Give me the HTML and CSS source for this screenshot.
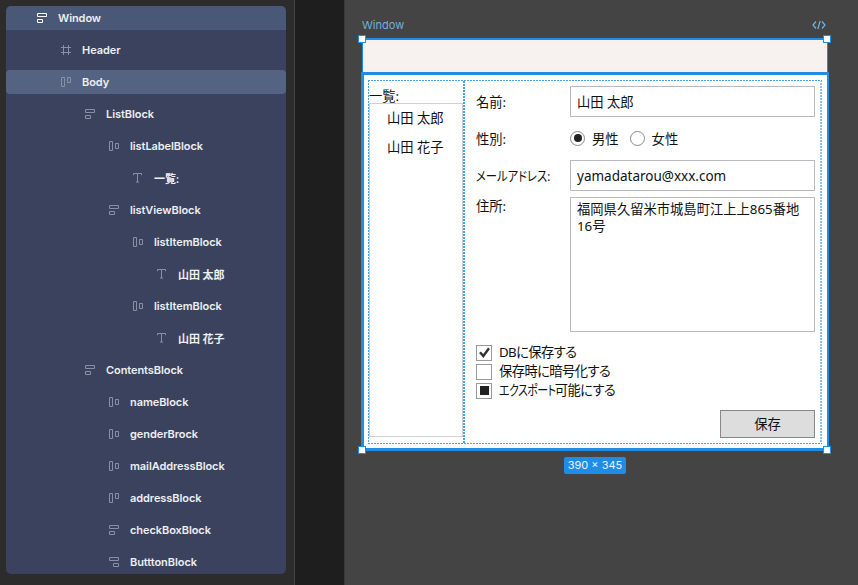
FILE: index.html
```html
<!DOCTYPE html>
<html lang="ja">
<head>
  <meta charset="UTF-8" />
  <meta name="viewport" content="width=device-width, initial-scale=1.0"/>
  <title>Window</title>
  <link rel="stylesheet" href="styles.css">
</head>
<body>

  <!-- Layer icons -->
  <svg class="icon-defs">
    <symbol id="icon-vertical" viewBox="0 0 12 12"><path d="M1.500 1.500h9v3h-9zM1.500 7.500h5v3h-5z"/></symbol>
    <symbol id="icon-vertical-right" viewBox="0 0 12 12"><path d="M1.500 1.500h9v3h-9zM5.500 7.500h5v3h-5z"/></symbol>
    <symbol id="icon-horizontal" viewBox="0 0 12 12"><path d="M1.500 1.500h3v9h-3zM7.500 3.500h3v5h-3z"/></symbol>
    <symbol id="icon-horizontal-top" viewBox="0 0 12 12"><path d="M1.500 1.500h3v9h-3zM7.500 1.500h3v5h-3z"/></symbol>
    <symbol id="icon-frame" viewBox="0 0 12 12"><path d="M3.500 1v10M8.500 1v10M1 3.500h10M1 8.500h10"/></symbol>
    <symbol id="icon-text" viewBox="0 0 12 12"><path d="M1.500 3.200V1.500h8v1.700M5.500 1.500v8.500M4 10h3"/></symbol>
  </svg>

  <div class="editor">
    <div class="sidebar">
      <div class="tree">
        <div class="layer level-0 selected"><svg class="icon"><use href="#icon-vertical"/></svg>Window</div>
        <div class="layer level-1"><svg class="icon"><use href="#icon-frame"/></svg>Header</div>
        <div class="layer level-1 hovered"><svg class="icon"><use href="#icon-horizontal-top"/></svg>Body</div>
        <div class="layer level-2"><svg class="icon"><use href="#icon-vertical"/></svg>ListBlock</div>
        <div class="layer level-3"><svg class="icon"><use href="#icon-horizontal"/></svg>listLabelBlock</div>
        <div class="layer level-4"><svg class="icon"><use href="#icon-text"/></svg>一覧:</div>
        <div class="layer level-3"><svg class="icon"><use href="#icon-vertical"/></svg>listViewBlock</div>
        <div class="layer level-4"><svg class="icon"><use href="#icon-horizontal"/></svg>listItemBlock</div>
        <div class="layer level-5"><svg class="icon"><use href="#icon-text"/></svg>山田 太郎</div>
        <div class="layer level-4"><svg class="icon"><use href="#icon-horizontal"/></svg>listItemBlock</div>
        <div class="layer level-5"><svg class="icon"><use href="#icon-text"/></svg>山田 花子</div>
        <div class="layer level-2"><svg class="icon"><use href="#icon-vertical"/></svg>ContentsBlock</div>
        <div class="layer level-3"><svg class="icon"><use href="#icon-horizontal"/></svg>nameBlock</div>
        <div class="layer level-3"><svg class="icon"><use href="#icon-horizontal"/></svg>genderBrock</div>
        <div class="layer level-3"><svg class="icon"><use href="#icon-horizontal"/></svg>mailAddressBlock</div>
        <div class="layer level-3"><svg class="icon"><use href="#icon-horizontal-top"/></svg>addressBlock</div>
        <div class="layer level-3"><svg class="icon"><use href="#icon-vertical"/></svg>checkBoxBlock</div>
        <div class="layer level-3"><svg class="icon"><use href="#icon-vertical-right"/></svg>ButttonBlock</div>
      </div>
    </div>

    <div class="gutter"></div>

    <div class="canvas">
      <div class="frame-title">
        <span>Window</span>
        <svg class="code-icon" viewBox="0 0 14 10"><path d="M4 1.500L1 5l3 3.500M10 1.500L13 5l-3 3.500M8.200 1L5.800 9"/></svg>
      </div>

      <div class="frame">
        <div class="frame-header"></div>
        <div class="frame-body">
          <div class="content">
            <div class="list-block">
              <div class="list-label">一覧:</div>
              <div class="list-view">
                <div class="list-item">山田 太郎</div>
                <div class="list-item">山田 花子</div>
              </div>
            </div>
            <div class="contents-block">
              <div class="field name-field">
                <div class="label">名前:</div>
                <div class="text-box">山田 太郎</div>
              </div>
              <div class="field gender-field">
                <div class="label">性別:</div>
                <div class="radio checked"></div>
                <div class="radio-label">男性</div>
                <div class="radio"></div>
                <div class="radio-label">女性</div>
              </div>
              <div class="field mail-field">
                <div class="label"><span class="kana">メールアドレス:</span></div>
                <div class="text-box mail">yamadatarou@xxx.com</div>
              </div>
              <div class="field address-field">
                <div class="label">住所:</div>
                <div class="text-area">福岡県久留米市城島町江上上865番地16号</div>
              </div>
              <div class="checks">
                <div class="check-row">
                  <div class="checkbox"><svg class="check" viewBox="0 0 13 13"><path d="M2 6.300l3.300 3.700L11 2.300"/></svg></div>
                  <span>DBに保存する</span>
                </div>
                <div class="check-row">
                  <div class="checkbox"></div>
                  <span>保存時に暗号化する</span>
                </div>
                <div class="check-row">
                  <div class="checkbox"><div class="partial"></div></div>
                  <span><span class="kana export">エクスポート</span>可能にする</span>
                </div>
              </div>
              <div class="button-row">
                <div class="save-button">保存</div>
              </div>
            </div>
          </div>
        </div>
        <div class="handle top-left"></div>
        <div class="handle top-right"></div>
        <div class="handle bottom-left"></div>
        <div class="handle bottom-right"></div>
      </div>

      <div class="size-badge">390 × 345</div>
    </div>
  </div>

</body>
</html>
```
FILE: styles.css
```css
* {
  box-sizing: border-box;
}
body {
  margin: 0;
  background-color: #444;
  font-family: Inter, "Noto Sans CJK JP", sans-serif;
}
.icon-defs {
  display: none;
}
.editor {
  display: flex;
  height: 585px;
  overflow: hidden;
}
.sidebar {
  width: 295px;
  padding: 6px 8px 0 6px;
  background-color: #2c2c2c;
  border-right: 1px solid #444;
}
.tree {
  display: flex;
  flex-direction: column;
  gap: 8px;
  width: 280px;
  background-color: #3a425e;
  border-radius: 5px;
  overflow: hidden;
}
.layer {
  display: flex;
  align-items: center;
  height: 24px;
  color: #eceef2;
  font-size: 11px;
  font-weight: 600;
  letter-spacing: -0.07px;
  white-space: nowrap;
}
.icon {
  width: 12px;
  height: 12px;
  margin-right: 10px;
  fill: none;
  stroke: #8990a5;
}
.level-0 { padding-left: 30px; }
.level-1 { padding-left: 54px; }
.level-2 { padding-left: 78px; }
.level-3 { padding-left: 102px; }
.level-4 { padding-left: 126px; }
.level-5 { padding-left: 150px; }
.selected {
  background-color: #4a5878;
}
.selected .icon {
  stroke: #fff;
}
.hovered {
  background-color: #546381;
  border-radius: 4px;
}
.gutter {
  width: 49px;
  background-color: #1e1e1e;
}
.canvas {
  flex: 1;
  padding: 18px 0 0 16px;
  background-color: #444;
  border-left: 1px solid #383838;
}
.frame-title {
  display: flex;
  justify-content: space-between;
  align-items: center;
  width: 467px;
  height: 14px;
  margin-bottom: 6px;
  padding: 0 2px 0 1px;
  color: #70aedb;
  font-size: 11px;
}
.code-icon {
  width: 14px;
  height: 10px;
  fill: none;
  stroke: #70b4e8;
  stroke-width: 1.2;
}
.frame {
  position: relative;
  width: 468px;
  height: 413px;
  color: #111;
  font-family: "Noto Sans", "Noto Sans CJK JP", sans-serif;
  font-size: 13.3px;
}
.frame-header {
  height: 34px;
  margin: 0 1px;
  background-color: #f7f1ef;
  border: 2px solid #1f8ce6;
  border-width: 2px 1px 0;
}
.frame-body {
  height: 379px;
  padding: 5px 5px 5px 4px;
  background-color: #fff;
  border: 3px solid #1f8ce6;
  border-right-width: 2px;
}
/* dotted guides around the auto layout areas */
.content {
  display: flex;
  height: 364px;
  padding: 1px;
  background:
    repeating-linear-gradient(90deg, #48a2ea 0 2px, #fff 2px 3px) top / 100% 1px no-repeat,
    repeating-linear-gradient(90deg, #48a2ea 0 2px, #fff 2px 3px) bottom / 100% 1px no-repeat,
    repeating-linear-gradient(#48a2ea 0 2px, #fff 2px 3px) left / 1px 100% no-repeat,
    repeating-linear-gradient(#8cc4f2 0 2px, #fff 2px 3px) right / 2px 100% no-repeat;
}
.list-block {
  width: 96px;
  padding: 5px 2px 6px 0;
  background: repeating-linear-gradient(#48a2ea 0 2px, #fff 2px 3px) right / 2px 100% no-repeat;
}
.list-label {
  height: 17px;
  line-height: 20px;
}
.list-view {
  height: 334px;
  border: 1px solid #d0d0d6;
}
.list-item {
  height: 29px;
  padding-left: 17px;
  line-height: 28px;
}
.contents-block {
  flex: 1;
  padding: 4px 6px 0 11px;
}
.field {
  display: flex;
  align-items: center;
}
.label {
  width: 94px;
}
.kana {
  display: inline-block;
  font-feature-settings: "palt";
  transform: scaleX(0.85);
  transform-origin: left;
  white-space: nowrap;
}
.export {
  margin-right: -13px;
  transform: scaleX(0.82);
}
.name-field {
  height: 32px;
}
.gender-field {
  height: 42px;
}
.mail-field {
  height: 32px;
}
.address-field {
  align-items: flex-start;
  height: 136px;
  margin-top: 6px;
  line-height: 17px;
}
.address-field .label {
  padding-top: 1px;
}
.text-box, .text-area {
  flex: 1;
  border: 1px solid #b9b9c0;
}
.text-box {
  height: 31px;
  padding-left: 6px;
  line-height: 31px;
}
.mail {
  font-size: 13.5px;
}
.text-area {
  height: 135px;
  padding: 3px 12px 0 6px;
}
.radio {
  display: flex;
  align-items: center;
  justify-content: center;
  width: 15px;
  height: 15px;
  border: 1px solid #888;
  border-radius: 50%;
}
.checked::before {
  content: "";
  width: 8px;
  height: 8px;
  border-radius: 50%;
  background-color: #222;
}
.radio-label {
  margin: 0 11px 0 7px;
}
.checks {
  padding-top: 10px;
  font-feature-settings: "palt";
  letter-spacing: -0.6px;
}
.check-row {
  display: flex;
  align-items: center;
  gap: 7px;
  height: 19px;
  line-height: 19px;
}
.checkbox {
  display: flex;
  align-items: center;
  justify-content: center;
  width: 16px;
  height: 16px;
  border: 1px solid #999;
}
.check {
  width: 13px;
  height: 13px;
  fill: none;
  stroke: #333;
  stroke-width: 2.4;
}
.partial {
  width: 9px;
  height: 9px;
  background-color: #222;
}
.button-row {
  display: flex;
  justify-content: flex-end;
  margin-top: 10px;
}
.save-button {
  width: 95px;
  height: 28px;
  background-color: #ddd;
  border: 1px solid #888;
  line-height: 27px;
  text-align: center;
}
.handle {
  position: absolute;
  width: 8px;
  height: 8px;
  background-color: #fff;
  border: 1px solid #1f8ce6;
}
.top-left { top: -3px; left: -3px; }
.top-right { top: -3px; right: -2px; }
.bottom-left { bottom: -3px; left: -3px; }
.bottom-right { bottom: -3px; right: -2px; }
.size-badge {
  width: 62px;
  height: 17px;
  margin: 6px 0 0 203px;
  background-color: #1f8ce6;
  border-radius: 2px;
  color: #e6f3ff;
  font-size: 11px;
  line-height: 17px;
  text-align: center;
  white-space: nowrap;
}
```
